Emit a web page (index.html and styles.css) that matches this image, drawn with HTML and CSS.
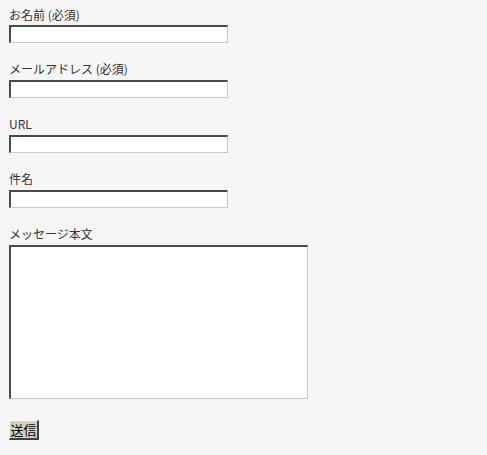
FILE: index.html
```html
<!DOCTYPE html>
<html lang="ja">
<head>
    <meta charset="UTF-8">
    <title>お問い合わせ</title>
    <link rel="stylesheet" href="styles.css">
</head>
<body>
    <form class="contact-form">
        <div class="field">
            <label class="field-label" for="name">お名前 (必須)</label>
            <input class="field-input" type="text" id="name">
        </div>
        <div class="field">
            <label class="field-label" for="email">メールアドレス (必須)</label>
            <input class="field-input" type="text" id="email">
        </div>
        <div class="field">
            <label class="field-label" for="url">URL</label>
            <input class="field-input" type="text" id="url">
        </div>
        <div class="field">
            <label class="field-label" for="subject">件名</label>
            <input class="field-input" type="text" id="subject">
        </div>
        <div class="field">
            <label class="field-label" for="message">メッセージ本文</label>
            <textarea class="field-textarea" id="message"></textarea>
        </div>
        <div class="actions">
            <button class="submit" type="button">送信</button>
        </div>
    </form>
</body>
</html>
```

FILE: styles.css
```css
body {
    margin: 0;
    padding: 9px 9px;
    background-color: #f6f6f6;
    color: #333;
    font-family: "Noto Sans CJK JP", "DejaVu Sans", sans-serif;
    font-size: 12px;
}

.contact-form {
    display: flex;
    flex-direction: column;
    gap: 20px;
}

.field {
    display: flex;
    flex-direction: column;
    align-items: flex-start;
}

.field-label {
    display: block;
    height: 17px;
    line-height: 12px;
}

.field:first-child .field-label {
    height: 16px;
}

.field-input,
.field-textarea {
    box-sizing: border-box;
    margin: 0;
    padding: 0 2px;
    background: #fff;
    border-style: solid;
    border-width: 2px 1px 1px 2px;
    border-color: #4a4a4a #c8c8c8 #c8c8c8 #4a4a4a;
    font-family: inherit;
    font-size: 12px;
    outline: none;
}

.field-input {
    width: 219px;
    height: 18px;
}

.field-textarea {
    width: 299px;
    height: 154px;
    resize: none;
}

.actions {
    padding-top: 1px;
}

.submit {
    box-sizing: border-box;
    width: 30px;
    height: 20px;
    margin: 0;
    padding: 0;
    background: #d4d0c8;
    border-style: solid;
    border-width: 1px 2px 2px 1px;
    border-color: #fff #404040 #404040 #fff;
    color: #000;
    font-family: inherit;
    font-size: 13px;
    line-height: 16px;
    white-space: nowrap;
}
```
